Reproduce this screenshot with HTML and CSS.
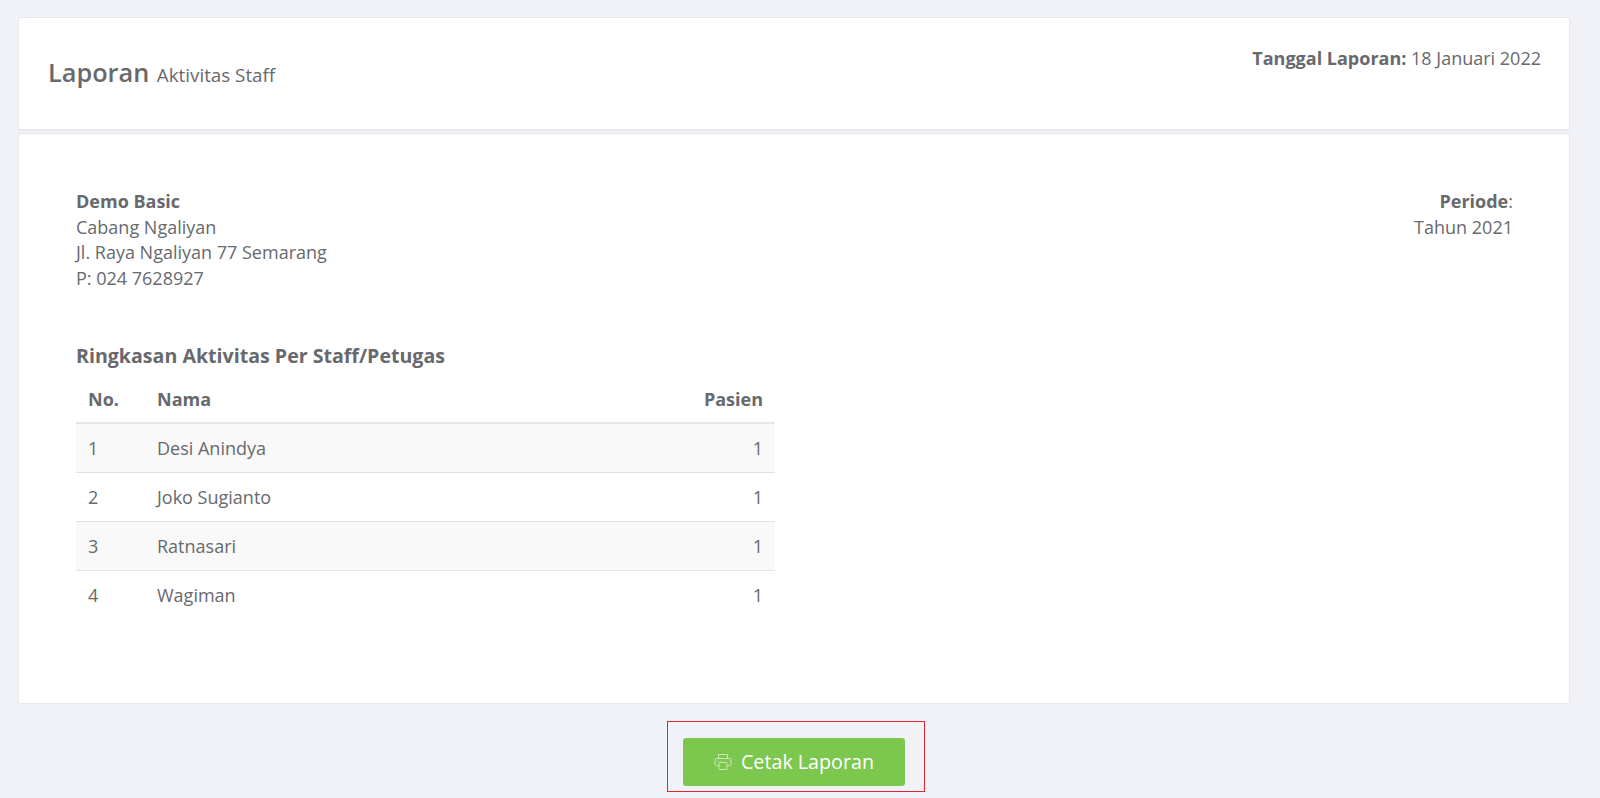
FILE: index.html
```html
<!DOCTYPE html>
<html lang="id">
<head>
<meta charset="utf-8">
<title>Laporan Aktivitas Staff</title>
<link rel="stylesheet" href="styles.css">
</head>
<body>
<main class="page">
  <section class="card head">
    <h1 class="title">Laporan <small>Aktivitas Staff</small></h1>
    <div class="date"><b>Tanggal Laporan:</b> 18 Januari 2022</div>
  </section>
  <section class="card body">
    <div class="info">
      <address class="addr"><b>Demo Basic</b><br>Cabang Ngaliyan<br>Jl. Raya Ngaliyan 77 Semarang<br>P: 024 7628927</address>
      <div class="period"><b>Periode</b>:<br>Tahun 2021</div>
    </div>
    <h2 class="sub">Ringkasan Aktivitas Per Staff/Petugas</h2>
    <table class="tbl">
      <thead><tr><th class="c-no">No.</th><th>Nama</th><th class="num">Pasien</th></tr></thead>
      <tbody>
        <tr><td>1</td><td>Desi Anindya</td><td class="num">1</td></tr>
        <tr><td>2</td><td>Joko Sugianto</td><td class="num">1</td></tr>
        <tr><td>3</td><td>Ratnasari</td><td class="num">1</td></tr>
        <tr><td>4</td><td>Wagiman</td><td class="num">1</td></tr>
      </tbody>
    </table>
  </section>
  <div class="actions">
    <div class="outline">
      <button class="btn" type="button">
        <svg class="ico" viewBox="0 0 18 18" fill="none" stroke="currentColor" stroke-width="1"><path d="M4.500 5.500V1.500h9v4"/><path d="M4.500 12.500H2.500a1.500 1.500 0 0 1-1.500-1.500V7a1.500 1.500 0 0 1 1.500-1.500h13A1.500 1.500 0 0 1 17 7v4a1.500 1.500 0 0 1-1.500 1.500h-2"/><rect x="5" y="9.500" width="8" height="7" rx=".5"/><path d="M3.500 8h1M6 8h.5"/></svg>
        <span>Cetak Laporan</span>
      </button>
    </div>
  </div>
</main>
</body>
</html>
```
FILE: styles.css
```css
* { box-sizing: border-box; }
html, body { margin: 0; height: 100%; }
body {
  background: #f0f2f7;
  color: #67696d;
  font: 18px/25.5px "Open Sans", "Noto Sans", sans-serif;
  overflow: hidden;
}
.page { padding: 17px 30px 0 18px; }
.card {
  background: #fff;
  border: 1px solid #e6e8ec;
  border-radius: 3px;
}
.head {
  height: 114px;
  display: flex;
  justify-content: space-between;
  padding: 27px 28px 0 29px;
  border-bottom-width: 2px;
}
.title { margin: 0; font-size: 25.300px; font-weight: 600; line-height: 34px; padding-top: 10px; }
.title small { font-size: 18.800px; font-weight: 400; margin-left: 1px; }
.date { line-height: 26px; }
.body { height: 571px; padding: 55px 56px 0 57px; margin-top: 2px; }
.info { display: flex; justify-content: space-between; }
.addr { font-style: normal; }
.period { text-align: right; }
.sub { margin: 52px 0 0; font-size: 19.600px; font-weight: 700; line-height: 26px; }
.tbl { width: 699px; border-collapse: collapse; margin-top: 10px; }
.tbl th { text-align: left; font-weight: 700; padding: 8px 12px 11px; border-bottom: 2px solid #e6e7e9; line-height: 24px; }
.tbl td { padding: 12px; height: 49px; border-bottom: 1px solid #e1e2e4; line-height: 24px; }
.tbl tr:last-child td { border-bottom: 0; }
.tbl tbody tr:nth-child(odd) { background: #f9f9f9; }
.tbl .num { text-align: right; }
.c-no { width: 69px; }
.tbl td:first-child { width: 69px; }
.actions { display: flex; justify-content: center; margin-top: 17px; padding-left: 4px; }
.outline { border: 1px solid #e8222a; padding: 16px 19px 6px 15px; width: 258px; height: 71px; }
.btn {
  display: flex;
  align-items: center;
  justify-content: center;
  gap: 9px;
  width: 222px;
  height: 48px;
  border: 0;
  border-radius: 3px;
  background: #7cc74e;
  color: #fff;
  font: 19.700px/26px "Open Sans", "Noto Sans", sans-serif;
}
.ico { width: 18px; height: 18px; opacity: .6; }
```
